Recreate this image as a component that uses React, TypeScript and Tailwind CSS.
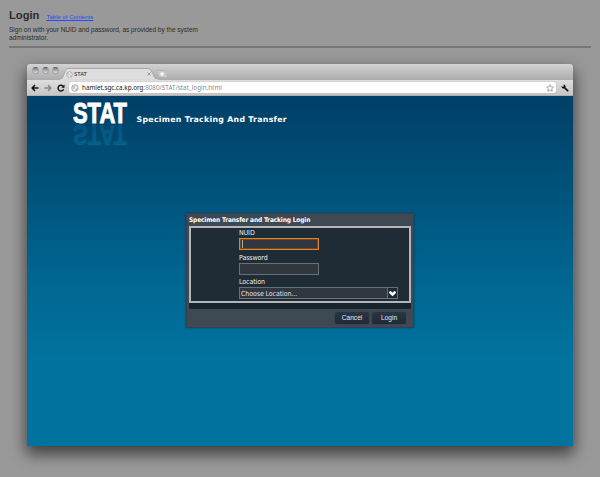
import React from "react";

function TrafficLight() {
  return (
    <span className="h-[7px] w-[7px] rounded-full border border-[#a3a5a9] border-t-[#5f6167] bg-linear-to-b from-[#7d8292] to-[#dcdde0]" />
  );
}

function Globe({ className }: { className: string }) {
  return (
    <svg viewBox="0 0 16 16" className={className} fill="none" stroke="#999">
      <circle cx="8" cy="8" r="6.7" strokeWidth="1.500" fill="#f2f2f2" />
      <path d="M3 4l4 1 1 3-3 2-2-3zM10 2l1 3 3 1M9 10l4-1-2 4z" fill="#ccc" strokeWidth=".7" />
    </svg>
  );
}

function TabStrip() {
  return (
    <div className="flex h-4 shrink-0 items-end rounded-t-[3px] bg-linear-to-b from-[#d2d2d2] to-[#acacac]">
      <div className="mb-[6px] ml-[5px] flex gap-[3px]">
        <TrafficLight />
        <TrafficLight />
        <TrafficLight />
      </div>
      <div className="relative ml-[1px] h-[12px] w-[98px]">
        <svg viewBox="0 0 98 12" className="absolute inset-0 h-full w-full">
          <path d="M0 12C4 11 4 1 8 .5H88C93 1 93 11 98 12Z" fill="#dedede" stroke="#979797" strokeWidth=".7" />
          <path d="M0 11.7H98" stroke="#dedede" />
        </svg>
        <div className="relative flex h-full items-center pl-[6px]">
          <Globe className="h-[7px] w-[7px]" />
          <span className="ml-px font-['Noto_Sans',sans-serif] text-[6px] leading-none text-[#222]">STAT</span>
          <svg viewBox="0 0 6 6" className="ml-auto mr-[7px] h-1 w-1" stroke="#999" strokeWidth="1.4">
            <path d="M.5 .5L5.500 5.500M5.500 .5L.5 5.500" />
          </svg>
        </div>
      </div>
      <svg viewBox="0 0 12 8" className="-ml-[2px] mb-[2px] h-[8px] w-[12px]">
        <path d="M1.500 .5H8.500Q9.500 .5 10 1.500L11.500 6Q11.800 7.500 10.500 7.500H4Q3 7.500 2.500 6.500L.7 2Q.3 .5 1.500 .5Z" fill="#cacaca" stroke="#a6a6a6" strokeWidth=".5" />
        <path d="M6 2V6M4 4H8" stroke="#fff" strokeWidth="1.200" />
      </svg>
    </div>
  );
}

function Toolbar() {
  return (
    <div className="flex h-4 shrink-0 items-center border-b border-[#b0b0b0] bg-linear-to-b from-[#dedede] to-[#c6c6c6] pl-1">
      <svg viewBox="0 0 8 8" className="h-[8px] w-[8px]" stroke="#111" strokeWidth="1.6" fill="none">
        <path d="M7.500 4H1.500M4 1L1.200 4L4 7" />
      </svg>
      <svg viewBox="0 0 8 8" className="ml-[5px] h-[8px] w-[8px]" stroke="#858585" strokeWidth="1.4" fill="none">
        <path d="M.5 4H6.500M4 1L6.800 4L4 7" />
      </svg>
      <svg viewBox="0 0 8 8" className="ml-[5px] h-[8px] w-[8px]" stroke="#111" strokeWidth="1.4" fill="none">
        <path d="M6.300 2.400A2.900 2.900 0 1 0 6.600 5.300" />
        <path d="M7.500 .6V3.700H4.400Z" fill="#111" stroke="none" />
      </svg>
      <div className="ml-[4px] flex h-[11px] w-[487px] items-center rounded-[2px] bg-white pl-[2px] pr-[2px] shadow-[0_0_1px_#999]">
        <Globe className="h-[8px] w-[8px] shrink-0" />
        <span className="ml-[3px] whitespace-nowrap pt-px font-['Noto_Sans',sans-serif] text-[6.300px] leading-none text-[#8a8a8a]">
          <span className="text-[#181818]">hamlet.sgc.ca.kp.org</span>:8080/STAT/stat_login.html
        </span>
        <svg viewBox="0 0 16 16" className="ml-auto h-[8px] w-[8px]" fill="#fff" stroke="#888" strokeWidth="1.5">
          <path d="M8 1L10.100 5.700L15 6.200L11.400 9.600L12.400 14.500L8 12L3.600 14.500L4.600 9.600L1 6.200L5.900 5.700Z" />
        </svg>
      </div>
      <svg viewBox="0 0 16 16" className="ml-[5px] h-[8px] w-[8px]" fill="#111">
        <path d="M5 1L5.500 4.500L3.800 5.800L1 4C.5 7.500 3 10 6.300 9L12.500 15.200C14 15.500 15.700 14 15 12.500L9 7C10 4 8.500 1.200 5 1Z" />
      </svg>
    </div>
  );
}

function StatLogo() {
  return (
    <svg viewBox="0 0 56 48" className="h-12 w-14 shrink-0 overflow-visible">
      <defs>
        <linearGradient id="fade" x1="0" y1="1" x2="0" y2="0">
          <stop offset="0" stopColor="#087da2" stopOpacity=".2" />
          <stop offset="1" stopColor="#087da2" stopOpacity=".5" />
        </linearGradient>
      </defs>
      <g fontFamily="Liberation Sans, Arial, sans-serif" fontWeight="700" fontSize="29">
        <text x="0" y="25" textLength="54" lengthAdjust="spacingAndGlyphs" fill="#fff" stroke="#fff" strokeWidth="1">
          STAT
        </text>
        <text x="0" y="-26.500" textLength="54" lengthAdjust="spacingAndGlyphs" fill="url(#fade)" stroke="url(#fade)" strokeWidth=".5" transform="scale(1 -1)">
          STAT
        </text>
      </g>
    </svg>
  );
}

function Label({ children }: { children: React.ReactNode }) {
  return <div className="h-[10px] text-[7px] leading-[11px] tracking-[-0.100px] text-[#eef0f2]">{children}</div>;
}

function FooterButton({ children }: { children: React.ReactNode }) {
  return (
    <button className="h-[12px] w-[34px] rounded-[2px] bg-linear-to-b from-[#2a3644] to-[#1f2a36] text-center font-['Liberation_Sans',Arial,sans-serif] text-[6.600px] leading-[12px] text-[#e4e7ea] shadow-[0_0_1px_#1b2632]">
      {children}
    </button>
  );
}

function LoginDialog() {
  return (
    <div className="mx-auto mt-[67px] flex h-[115px] w-[228px] flex-col border border-[#34424f] bg-[#3f4954] px-[2px] font-['DejaVu_Sans_Condensed','DejaVu_Sans',sans-serif] shadow-[0_0_2px_rgba(0,30,60,0.5)]">
      <div className="h-[12px] whitespace-nowrap text-[6.500px] font-bold leading-[13px] tracking-[-0.120px] text-white">
        Specimen Transfer and Tracking Login
      </div>
      <div className="h-[83px] bg-[#17242d]">
        <div className="h-[77px] border-2 border-[#b3b6b9] bg-[#1f2c36] pl-[48px]">
          <Label>NUID</Label>
          <div className="flex h-[12px] w-[80px] items-center border border-[#dd831f] bg-[#32373f] pl-[2px] shadow-[inset_0_0_0_0.5px_#9b6021]">
            <span className="h-[8px] w-px bg-[#a8acb0]" />
          </div>
          <div className="h-[3px]" />
          <Label>Password</Label>
          <div className="h-[12px] w-[80px] border border-[#66707a] bg-[#32373f]" />
          <div className="h-[2px]" />
          <Label>Location</Label>
          <div className="flex h-[12px] w-[159px] border border-[#66707a] bg-[#32373f]">
            <span className="flex-1 pl-[1px] text-[7px] leading-[12px] tracking-[-0.100px] text-[#dfe1e4]">Choose Location...</span>
            <span className="flex w-[10px] items-center justify-center border-l border-[#66707a] bg-[#1d2935]">
              <svg viewBox="0 0 8 8" className="h-[7px] w-[7px]" fill="#fff">
                <path d="M0 2L2 1L4 3L6 1L8 2V3.500L4 7L0 3.500Z" />
              </svg>
            </span>
          </div>
        </div>
      </div>
      <div className="flex flex-1 items-center justify-end gap-[3px] pr-[5px]">
        <FooterButton>Cancel</FooterButton>
        <FooterButton>Login</FooterButton>
      </div>
    </div>
  );
}

export default function App() {
  return (
    <div className="h-[477px] w-[600px] overflow-hidden bg-[#999] px-[9px] pt-[9px] font-['Liberation_Sans',Arial,sans-serif] text-[#2c2c2c]">
      <header className="h-[39px] border-b-2 border-[#767676]">
        <div className="flex h-[13px] items-baseline">
          <h1 className="text-[11.200px] font-bold leading-[13px]">Login</h1>
          <a className="ml-[7px] text-[6px] leading-[8px] text-[#204df5] underline">Table of Contents</a>
        </div>
        <p className="mt-[4px] w-[200px] text-[6.500px] leading-[8px]">
          Sign on with your NUID and password, as provided by the system administrator.
        </p>
      </header>
      <div className="mx-[18px] mt-4 flex h-[382px] flex-col rounded-t-[3px] shadow-[0_7px_15px_1px_rgba(0,0,0,0.6)]">
        <TabStrip />
        <Toolbar />
        <main className="flex-1 bg-linear-to-b from-[#004169] from-3% via-[#006690] via-52% to-[#00739f] to-75%">
          <div className="flex h-[50px] pl-[45.500px] pt-[2px]">
            <StatLogo />
            <h2 className="ml-[8px] mt-[16px] whitespace-nowrap font-['DejaVu_Sans',Verdana,sans-serif] text-[7.800px] font-bold leading-[12px] tracking-[0.300px] text-white">
              Specimen Tracking And Transfer
            </h2>
          </div>
          <LoginDialog />
        </main>
      </div>
    </div>
  );
}
